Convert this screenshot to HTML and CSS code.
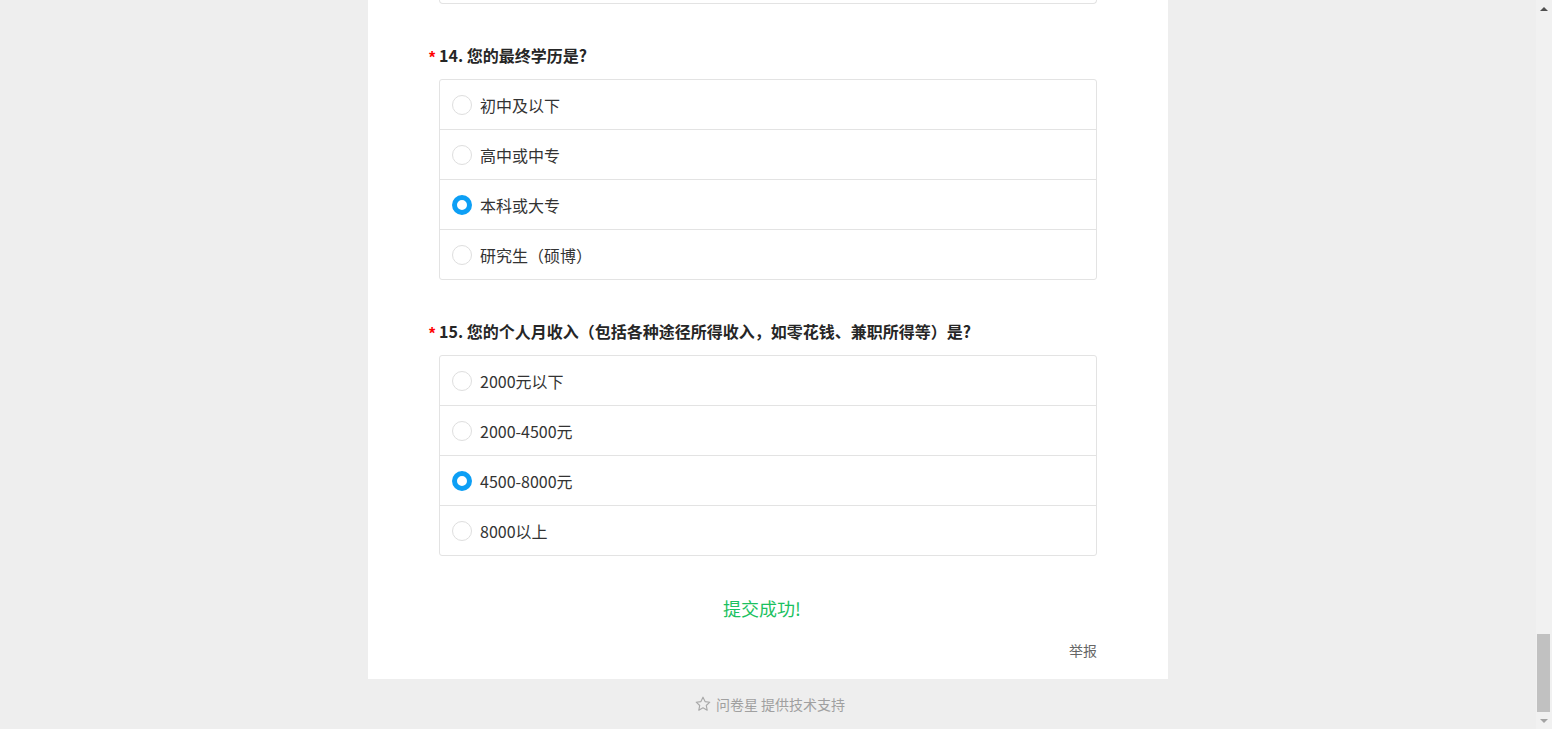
FILE: index.html
```html
<!DOCTYPE html>
<html lang="zh-CN">
<head>
<meta charset="utf-8">
<title>问卷</title>
<link rel="stylesheet" href="styles.css">
</head>
<body>
<div class="viewport">
  <div class="page">
    <div class="prev-box"></div>

    <div class="question">
      <div class="q-title"><span class="req">*</span><span class="q-text">14. 您的最终学历是?</span></div>
      <div class="options">
        <div class="option"><span class="radio"></span><span class="label">初中及以下</span></div>
        <div class="option"><span class="radio"></span><span class="label">高中或中专</span></div>
        <div class="option"><span class="radio checked"></span><span class="label">本科或大专</span></div>
        <div class="option"><span class="radio"></span><span class="label">研究生（硕博）</span></div>
      </div>
    </div>

    <div class="question">
      <div class="q-title"><span class="req">*</span><span class="q-text">15. 您的个人月收入（包括各种途径所得收入，如零花钱、兼职所得等）是?</span></div>
      <div class="options">
        <div class="option"><span class="radio"></span><span class="label">2000元以下</span></div>
        <div class="option"><span class="radio"></span><span class="label">2000-4500元</span></div>
        <div class="option"><span class="radio checked"></span><span class="label">4500-8000元</span></div>
        <div class="option"><span class="radio"></span><span class="label">8000以上</span></div>
      </div>
    </div>

    <div class="success">提交成功!</div>
    <div class="report-row"><span class="report">举报</span></div>
  </div>

  <div class="footer">
    <svg class="star" width="16" height="16" viewBox="0 0 24 24" aria-hidden="true">
      <path d="M12 1.8l3.1 6.6 7.1.9-5.3 4.9 1.4 7.1L12 17.8l-6.3 3.5 1.4-7.1-5.3-4.9 7.1-.9z" fill="none" stroke="#a8a8a8" stroke-width="1.7" stroke-linejoin="round"/>
    </svg>
    <span>问卷星 提供技术支持</span>
  </div>
</div>

<div class="scrollbar">
  <div class="sb-btn"><span class="arrow-up"></span></div>
  <div class="sb-track"><div class="sb-thumb"></div></div>
  <div class="sb-btn"><span class="arrow-down"></span></div>
</div>
</body>
</html>
```

FILE: styles.css
```css
html, body {
  margin: 0;
  padding: 0;
  height: 100%;
}

body {
  display: flex;
  background: #eeeeee;
  overflow: hidden;
  font-family: "Microsoft YaHei", "Noto Sans CJK SC", "Noto Sans", sans-serif;
  color: #333333;
}

.viewport {
  flex: 1;
  display: flex;
  flex-direction: column;
  align-items: center;
  height: 729px;
}

.page {
  width: 800px;
  box-sizing: border-box;
  background: #ffffff;
  padding: 0 71px 19px;
}

.prev-box {
  height: 3px;
  border: 1px solid #e3e3e3;
  border-top: none;
  border-radius: 0 0 4px 4px;
}

.question {
  margin-top: 39px;
}

.q-title {
  display: flex;
  align-items: flex-start;
  height: 24px;
  margin-left: -10px;
  white-space: nowrap;
}

.q-text {
  font-size: 16px;
  line-height: 24px;
  font-weight: bold;
  color: #262626;
}

.req {
  width: 10px;
  flex-shrink: 0;
  padding-top: 6px;
  color: #ff0000;
  font-family: "Liberation Sans", Arial, sans-serif;
  font-weight: bold;
  font-size: 16px;
  line-height: 18px;
}

.options {
  margin-top: 12px;
  border: 1px solid #e3e3e3;
  border-radius: 3px;
}

.option {
  display: flex;
  align-items: center;
  height: 49px;
  padding-left: 12px;
  border-bottom: 1px solid #e3e3e3;
}

.option:last-child {
  border-bottom: none;
}

.radio {
  width: 20px;
  height: 20px;
  box-sizing: border-box;
  border: 1px solid #dedede;
  border-radius: 50%;
  background: #ffffff;
  flex-shrink: 0;
}

.radio.checked {
  border: 5px solid #0d9ff5;
}

.label {
  margin-left: 8px;
  font-size: 16px;
  line-height: 22px;
  color: #333333;
}

.success {
  margin-top: 40px;
  text-align: center;
  font-size: 18px;
  line-height: 24px;
  color: #1bc160;
  padding-right: 12px;
}

.report-row {
  margin-top: 20px;
  display: flex;
  justify-content: flex-end;
}

.report {
  font-size: 14px;
  line-height: 20px;
  color: #666666;
}

.footer {
  height: 50px;
  display: flex;
  align-items: center;
  justify-content: center;
  gap: 5px;
  font-size: 14px;
  color: #a0a0a0;
  padding-left: 4px;
}

.star {
  display: block;
}

.scrollbar {
  width: 16px;
  height: 729px;
  background: #f1f1f1;
  display: flex;
  flex-direction: column;
  flex-shrink: 0;
}

.sb-btn {
  height: 17px;
  display: flex;
  align-items: center;
  justify-content: center;
}

.arrow-up {
  width: 0;
  height: 0;
  border-left: 4px solid transparent;
  border-right: 4px solid transparent;
  border-bottom: 4px solid #505050;
}

.arrow-down {
  width: 0;
  height: 0;
  border-left: 4px solid transparent;
  border-right: 4px solid transparent;
  border-top: 4px solid #a3a3a3;
}

.sb-track {
  flex: 1;
  display: flex;
  flex-direction: column;
  justify-content: flex-end;
}

.sb-thumb {
  height: 78px;
  margin: 0 2px 0 1px;
  background: #c1c1c1;
}
```
